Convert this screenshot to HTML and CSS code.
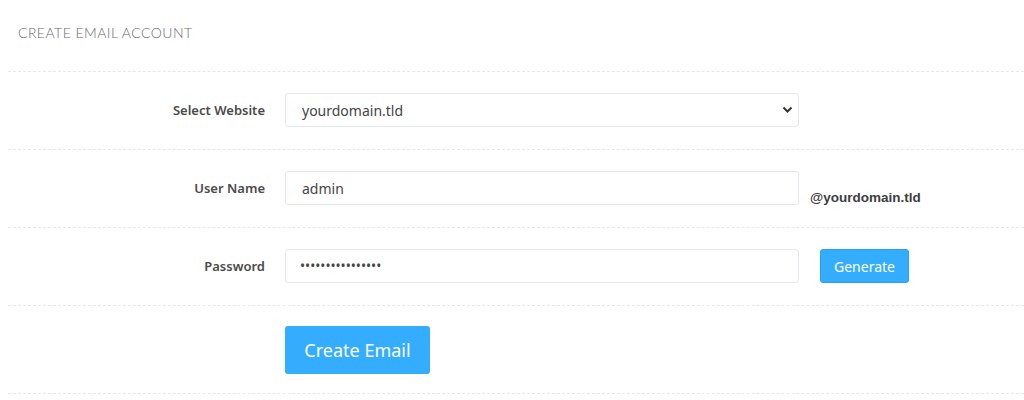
FILE: index.html
```html
<!DOCTYPE html>
<html>
<head>
<meta charset="utf-8">
<link rel="stylesheet" href="styles.css">
</head>
<body>
<div class="panel">
  <div class="title">CREATE EMAIL ACCOUNT</div>
  <form class="form">
    <div class="row">
      <label class="label">Select Website</label>
      <div class="field select-wrap">
        <select class="control select"><option>yourdomain.tld</option></select>
        <svg class="chev" width="11" height="8" viewBox="0 0 11 8"><path d="M1.5 1.5 L5.5 5.5 L9.5 1.5" fill="none" stroke="#333" stroke-width="2"/></svg>
      </div>
    </div>
    <div class="row">
      <label class="label">User Name</label>
      <div class="field"><input class="control" type="text" value="admin"></div>
      <span class="suffix">@yourdomain.tld</span>
    </div>
    <div class="row">
      <label class="label">Password</label>
      <div class="field"><input class="control pw" type="password" value="abcdefghijklmnop"></div>
      <button type="button" class="btn btn-sm">Generate</button>
    </div>
    <div class="row row-last">
      <span class="label"></span>
      <button type="button" class="btn btn-lg">Create Email</button>
    </div>
  </form>
</div>
</body>
</html>
```
FILE: styles.css
```css
html, body { margin: 0; padding: 0; background: #fff; }
body { font-family: "Noto Sans", "Open Sans", sans-serif; color: #444; }
.panel { padding-left: 8px; }
.title {
  font-family: "Lato", "Open Sans", sans-serif;
  font-weight: 300;
  font-size: 14px;
  letter-spacing: 0.45px;
  color: #6a6a6a;
  padding: 24px 0 0 10px;
  height: 72px;
  box-sizing: border-box;
  border-bottom: 1px dashed #e3e8ee;
}
.form { margin: 0; }
.row {
  display: flex;
  align-items: center;
  padding: 21px 0 22px;
  border-bottom: 1px dashed #e3e8ee;
}
.row-last { padding: 20px 0 19px; }
.label {
  width: 257px;
  flex: none;
  text-align: right;
  font-size: 13px;
  font-weight: 600;
  color: #4a4a4a;
  margin-right: 20px;
}
.field { width: 514px; flex: none; position: relative; }
.control {
  width: 100%;
  height: 34px;
  box-sizing: border-box;
  border: 1px solid #e4e9ef;
  border-radius: 3px;
  padding: 0 16px;
  font-family: "Noto Sans", sans-serif;
  font-size: 14px;
  color: #444;
  background: #fff;
  outline: none;
}
.select { appearance: none; -webkit-appearance: none; }
.chev { position: absolute; right: 6px; top: 13px; pointer-events: none; }
.pw { letter-spacing: 0; font-size: 13.5px; padding-left: 14px; }
.suffix {
  font-family: "Liberation Sans", Arial, sans-serif;
  font-weight: 700;
  font-size: 13.5px;
  color: #3d3d3d;
  margin-left: 11px;
  margin-top: 18px;
}
.btn {
  border: none;
  border-radius: 3px;
  background: #35adff;
  color: #fff;
  font-family: "Noto Sans", sans-serif;
  cursor: pointer;
}
.btn-sm { margin-left: 21px; width: 89px; height: 34px; font-size: 14px; border: 1px solid #2b9fef; }
.btn-lg { width: 145px; height: 48px; font-size: 18px; }
```
